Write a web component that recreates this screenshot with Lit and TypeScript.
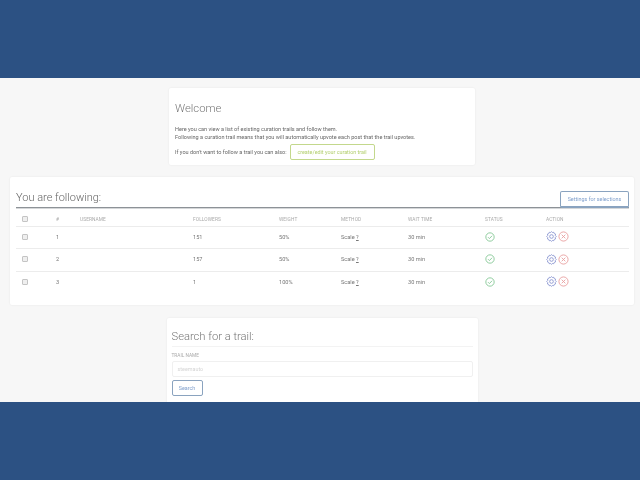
import { LitElement, html, css, svg } from "lit";
import { customElement } from "lit/decorators.js";

const rows = [
  { n: 1, followers: "151", weight: "50%" },
  { n: 2, followers: "157", weight: "50%" },
  { n: 3, followers: "1", weight: "100%" },
];

const check = svg`<svg class="ic" viewBox="0 0 12 12" width="10" height="10"><circle cx="6" cy="6" r="5" fill="none" stroke="#7cc48e" stroke-width="1"/><path d="M3.6 6.2l1.7 1.7 3.2-3.4" fill="none" stroke="#7cc48e" stroke-width="1"/></svg>`;
const gear = svg`<svg class="ic" viewBox="0 0 12 12" width="11" height="11"><path d="M6 .6l1 1.1 1.5-.3.5 1.4 1.4.5-.3 1.5 1.1 1.2-1.1 1.2.3 1.5-1.4.5-.5 1.4-1.5-.3L6 11.4l-1-1.1-1.5.3-.5-1.4-1.4-.5.3-1.5L.8 6l1.1-1.2-.3-1.5L3 2.8l.5-1.4 1.5.3z" fill="none" stroke="#8490cf" stroke-width=".9"/><circle cx="6" cy="6" r="2" fill="none" stroke="#8490cf" stroke-width=".9"/></svg>`;
const cross = svg`<svg class="ic" viewBox="0 0 12 12" width="11" height="11"><circle cx="6" cy="6" r="5" fill="none" stroke="#e9a0a0" stroke-width="1"/><path d="M4 4l4 4M8 4l-4 4" fill="none" stroke="#e9a0a0" stroke-width="1"/></svg>`;

@customElement("app-root")
export class AppRoot extends LitElement {
  static styles = css`
    :host { display: block; width: 640px; height: 480px; overflow: hidden; font-family: Roboto, "Liberation Sans", sans-serif; color: #777; }
    .page { height: 480px; display: flex; flex-direction: column; background: #2c5183; }
    .band { height: 78px; flex: none; }
    .main { height: 324px; flex: none; background: #f7f7f7; overflow: hidden; display: flex; flex-direction: column; align-items: center; padding: 10px 0 0 4px; box-sizing: border-box; }
    .card { flex: none; background: #fff; border-radius: 2px; box-shadow: 0 0 2px rgba(0,0,0,.08); box-sizing: border-box; filter: blur(0.45px); }
    .welcome { width: 306px; height: 77px; padding: 14px 6px 0; }
    .welcome h1 { margin: 0 0 10px; font-size: 11.3px; font-weight: 300; line-height: 14px; color: #777; }
    .welcome p { margin: 0; font-size: 5.54px; line-height: 7.5px; color: #666; }
    .also { display: flex; align-items: center; gap: 3px; margin-top: 3px; font-size: 5.54px; color: #666; }
    .green { height: 16px; width: 85px; border: 1.5px solid #c3d88c; border-radius: 2px; box-sizing: border-box; color: #b3cf6e; display: flex; align-items: center; justify-content: center; font-size: 5.4px; }
    .following { width: 624px; height: 128px; margin-top: 12px; padding: 13px 5px 0 6px; }
    .head { display: flex; justify-content: space-between; align-items: flex-end; height: 17px; border-bottom: 1px solid #8d9297; box-shadow: 0 1px 0 #d5d7d9; }
    .head h2 { margin: 0 0 1px; font-size: 11px; font-weight: 300; line-height: 16px; color: #666; }
    .outline { border: 1px solid #8aa3bf; border-radius: 2px; box-sizing: border-box; background: #fff; color: #7f9fcc; display: flex; align-items: center; justify-content: center; font-size: 5.4px; }
    .settings { width: 69px; height: 17px; margin-bottom: -1px; border-bottom-width: 2px; }
    .row { display: grid; grid-template-columns: 40px 24px 113px 86px 62px 67px 77px 61px 1fr; align-items: center; height: 22.4px; padding-bottom: 2px; border-bottom: 1px solid #ececec; box-sizing: border-box; font-size: 5.6px; color: #777; }
    .row.th { height: 19px; padding: 4px 0 0; font-size: 4.8px; color: #aaa; letter-spacing: .1px; }
    .row.plain { border-bottom: none; }
    .box { width: 4px; height: 4px; margin-left: 6px; border: 1px solid #c4c4c4; background: #efefef; border-radius: 1px; }
    .q { text-decoration: underline; }
    .actions { display: flex; gap: 1px; align-items: center; }
    .ic { display: block; }
    .search { width: 311px; height: 90px; margin-top: 13px; padding: 12px 5px 0; }
    .search h2 { margin: 0; font-size: 11.2px; font-weight: 300; line-height: 14px; color: #777; padding-bottom: 2px; border-bottom: 1px solid #f3f3f3; }
    .search label { display: block; margin-top: 5px; font-size: 4.8px; line-height: 7px; color: #aaa; }
    .input { height: 16px; margin: 2px 0 3px; border: 1px solid #f0f0f0; border-radius: 2px; box-sizing: border-box; padding-left: 5px; display: flex; align-items: center; font-size: 5.4px; color: #d5d5d5; }
    .btn { width: 31px; height: 16px; }
  `;

  render() {
    return html`<div class="page">
      <div class="band"></div>
      <div class="main">
        <section class="card welcome">
          <h1>Welcome</h1>
          <p>Here you can view a list of existing curation trails and follow them.</p>
          <p>Following a curation trail means that you will automatically upvote each post that the trail upvotes.</p>
          <div class="also"><span>If you don't want to follow a trail you can also:</span><span class="green">create/edit your curation trail</span></div>
        </section>
        <section class="card following">
          <div class="head"><h2>You are following:</h2><span class="outline settings">Settings for selections</span></div>
          <div class="row th"><span class="box"></span><span>#</span><span>USERNAME</span><span>FOLLOWERS</span><span>WEIGHT</span><span>METHOD</span><span>WAIT TIME</span><span>STATUS</span><span>ACTION</span></div>
          ${rows.map((r, i) => html`<div class="row ${i === 2 ? "plain" : ""}">
            <span class="box"></span><span>${r.n}</span><span></span><span>${r.followers}</span><span>${r.weight}</span>
            <span>Scale <span class="q">?</span></span><span>30 min</span><span>${check}</span>
            <span class="actions">${gear}${cross}</span>
          </div>`)}
        </section>
        <section class="card search">
          <h2>Search for a trail:</h2>
          <label>TRAIL NAME</label>
          <div class="input">steemauto</div>
          <span class="outline btn">Search</span>
        </section>
      </div>
      <div class="band"></div>
    </div>`;
  }
}
